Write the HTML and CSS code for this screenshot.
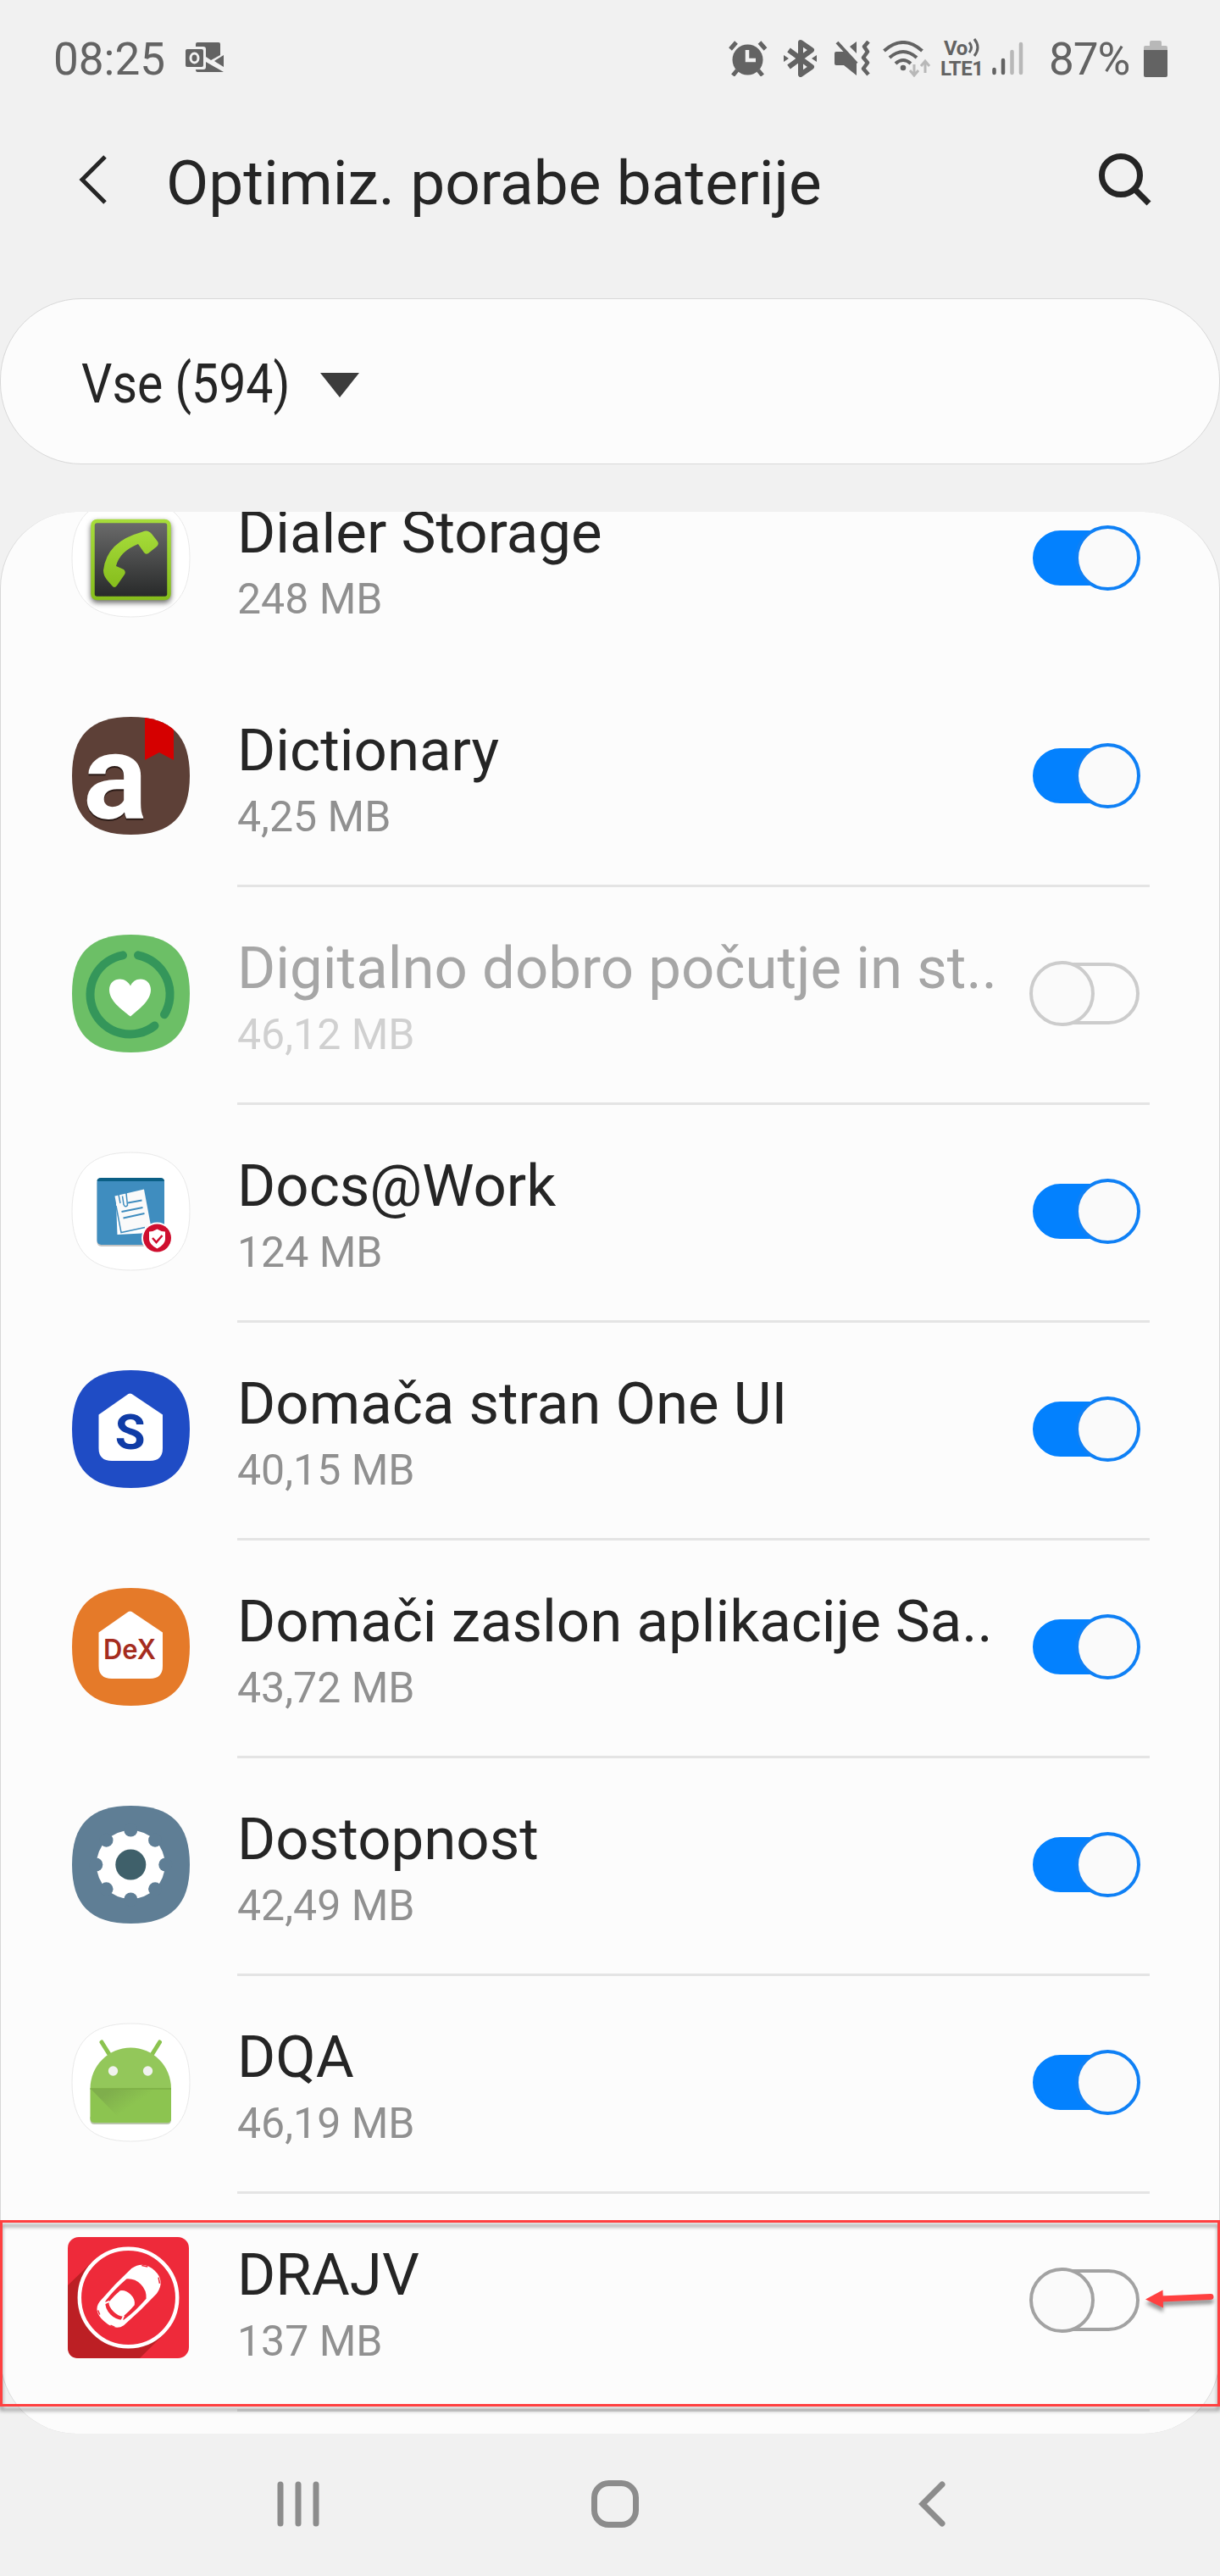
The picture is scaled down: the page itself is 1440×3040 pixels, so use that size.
FILE: index.html
```html
<!DOCTYPE html>
<html lang="sl">
<head>
    <meta charset="UTF-8">
    <meta name="viewport" content="width=device-width, initial-scale=1.0">
    <title>Optimiz. porabe baterije</title>
    <link rel="stylesheet" href="styles.css">
</head>
<body>
    <div class="screen">
        <div class="status-bar">
            <span class="clock">08:25</span>
            <svg class="icon-outlook" width="46" height="36" viewBox="0 0 46 36">
                <path d="M14 0h25q2 0 2 2v13L30 21l-6-4V8q0-3-3-3h-9V2q0-2 2-2z" fill="#636363"/>
                <path d="M45 15v14l-11-7zM24 23l21 12H14q-2 0-2-3h9q3 0 3-3z" fill="#636363"/>
                <rect x="0" y="8" width="21" height="21" rx="2" fill="#636363"/>
                <ellipse cx="10.500" cy="18.500" rx="4.500" ry="5.500" fill="none" stroke="#f1f1f1" stroke-width="3"/>
            </svg>
            <div class="status-icons">
                <svg class="icon-alarm" width="46" height="42" viewBox="0 0 46 42">
                    <ellipse cx="22.500" cy="22.500" rx="18" ry="18" fill="#636363"/>
                    <path d="M2 10l7-8M43.500 10l-7-8M10 35l-5 6M35 35l5 6" stroke="#636363" stroke-width="5"/>
                    <path d="M22 11v12h10" fill="none" stroke="#f1f1f1" stroke-width="4.500"/>
                </svg>
                <svg class="icon-bluetooth" width="40" height="44" viewBox="0 0 40 44">
                    <path d="M6 12l27 20-13 9V3l13 9L6 32" fill="none" stroke="#636363" stroke-width="6" stroke-linejoin="round"/>
                    <path d="M0 18l6 4-6 4zM39 18l-6 4 6 4z" fill="#636363"/>
                </svg>
                <svg class="icon-mute" width="42" height="42" viewBox="0 0 42 42">
                    <path d="M0 15q0-2 2-2h9l15 14v14L11 29H2q-2 0-2-2zM26 1v14l-8-8z" fill="#636363"/>
                    <path d="M3 2l23 25" stroke="#636363" stroke-width="4"/>
                    <path d="M40 1l-5 6 4 6-5 7 5 6-5 7 6 7" fill="none" stroke="#636363" stroke-width="4.500" stroke-linejoin="round"/>
                </svg>
                <svg class="icon-wifi" width="57" height="43" viewBox="0 0 57 43">
                    <path d="M1.500 12q22.500-20 45 0M8 20q16-14 32 0M15 27q9-8 18 0" fill="none" stroke="#636363" stroke-width="4"/>
                    <circle cx="24" cy="32" r="3.300" fill="#636363"/>
                    <path d="M37 28v12M32 35l5 6 5-6M50 38V25M45 30l5-6 5 6" fill="none" stroke="#b8b8b8" stroke-width="3"/>
                </svg>
                <div class="volte">
                    <div class="volte-top">Vo<svg width="14" height="22" viewBox="0 0 14 22"><path d="M2 5q5 6 0 12M8 1q8 10 0 20" fill="none" stroke="#636363" stroke-width="3"/></svg></div>
                    <div>LTE1</div>
                </div>
                <svg class="icon-signal" width="38" height="40" viewBox="0 0 38 40">
                    <path d="M2.500 33v4M13 22v15" stroke="#636363" stroke-width="4.500" stroke-linecap="round"/>
                    <path d="M23.500 12v25M34 3v34" stroke="#b8b8b8" stroke-width="4.500" stroke-linecap="round"/>
                </svg>
                <span class="percent">87%</span>
                <svg class="icon-battery" width="28" height="43" viewBox="0 0 28 43">
                    <path d="M0 11V8q0-2 2-2h5V2q0-2 2-2h10q2 0 2 2v4h5q2 0 2 2v3z" fill="#b8b8b8"/>
                    <path d="M0 11h28v30q0 2-2 2H2q-2 0-2-2z" fill="#636363"/>
                </svg>
            </div>
        </div>

        <header class="header">
            <svg class="back" width="34" height="58" viewBox="0 0 34 58">
                <path d="M31 2L4 29l27 27" fill="none" stroke="#252525" stroke-width="5"/>
            </svg>
            <h1>Optimiz. porabe baterije</h1>
            <svg class="search" width="64" height="64" viewBox="0 0 64 64">
                <circle cx="27" cy="27" r="22.500" fill="none" stroke="#252525" stroke-width="7"/>
                <path d="M43 43l17 17" stroke="#252525" stroke-width="7"/>
            </svg>
        </header>

        <div class="filter">
            <span class="filter-text">Vse (594)</span>
            <svg class="caret" width="46" height="29" viewBox="0 0 46 29"><path d="M0 0h46L23 29z" fill="#3c3c3c"/></svg>
        </div>

        <main class="list">
            <div class="row no-line">
                <svg class="app-icon" viewBox="0 0 139 139">
                    <defs>
                        <linearGradient id="dial-bg" x1="0" y1="0" x2="0" y2="1">
                            <stop offset="0" stop-color="#6c6c6c"/>
                            <stop offset="1" stop-color="#262828"/>
                        </linearGradient>
                        <linearGradient id="dial-fg" x1="0" y1="0" x2="0" y2="1">
                            <stop offset="0" stop-color="#a6dc3a"/>
                            <stop offset="1" stop-color="#86bd1c"/>
                        </linearGradient>
                        <path id="squircle" d="M69.500 0C117 0 139 22 139 69.500S117 139 69.500 139 0 117 0 69.500 22 0 69.500 0z"/>
                    </defs>
                    <use href="#squircle" fill="#fff" stroke="#e9e9e9"/>
                    <rect class="dial-frame" x="24.500" y="26" width="90" height="91" rx="5" fill="url(#dial-bg)" stroke="url(#dial-fg)" stroke-width="4.500"/>
                    <path d="M82 39Q89 35 94 41L101 50Q103 53 100 56L90 64Q87 66 85 63L78 53Q56 62 52 79L61 83Q64 86 62 89L53 102Q50 106 47 102L41 95Q37 90 37 84Q41 50 82 39z" fill="url(#dial-fg)"/>
                </svg>
                <div class="info">
                    <div class="name">Dialer Storage</div>
                    <div class="size">248 MB</div>
                </div>
                <div class="toggle on"></div>
            </div>

            <div class="row">
                <svg class="app-icon" viewBox="0 0 139 139">
                    <clipPath id="round"><use href="#squircle"/></clipPath>
                    <use href="#squircle" fill="#5d4037"/>
                    <path d="M86 0h34v51l-17-9-17 9z" fill="#d50000" clip-path="url(#round)"/>
                    <text class="letter-a" x="51" y="120" text-anchor="middle">a</text>
                </svg>
                <div class="info">
                    <div class="name">Dictionary</div>
                    <div class="size">4,25 MB</div>
                </div>
                <div class="toggle on"></div>
            </div>

            <div class="row disabled">
                <svg class="app-icon" viewBox="0 0 139 139">
                    <use href="#squircle" fill="#6cbf66"/>
                    <path d="M78 24.300A47 47 0 0 1 109 94.300M97.500 107.500A47 47 0 1 1 60 24.300" fill="none" stroke="#34965a" stroke-width="10" stroke-linecap="round"/>
                    <path d="M69 96.500C58 88 44 78 44 65C44 57 50 52.500 56.500 52.500C62 52.500 66.500 56 69 60.500C71 56 75 52.500 81 52.500C87 52.500 93 57 93 65C93 78 79 88 69 96.500z" fill="#fff"/>
                </svg>
                <div class="info">
                    <div class="name">Digitalno dobro počutje in st..</div>
                    <div class="size">46,12 MB</div>
                </div>
                <div class="toggle"></div>
            </div>

            <div class="row">
                <svg class="app-icon" viewBox="0 0 139 139">
                    <use href="#squircle" fill="#fff" stroke="#e9e9e9"/>
                    <rect x="29.500" y="31" width="79.500" height="80" rx="5" fill="#c4c4c4"/>
                    <rect x="29.500" y="30" width="79.500" height="79" rx="5" fill="#3f8dbf"/>
                    <path d="M29.500 34q0-4 5-4h69.500q5 0 5 4z" fill="#0b5f85"/>
                    <path d="M52 60l1.500 37 29-1.500 8-6z" fill="#fff"/>
                    <path d="M50.500 51.500L85 43.500l8 43-34.500 8z" fill="#fafafa"/>
                    <path d="M52 63l6 31.500 28-6" fill="none" stroke="#3f8dbf" stroke-width="1.500"/>
                    <path d="M66 59.500l16.500-3M58.500 70l25-5M60.500 77.500l25-5.500" stroke="#3f8dbf" stroke-width="1.800"/>
                    <path d="M57 60l-2-10q0-4 4-4.500t5 3l1.500 14q-3 3-4.500-1l-1.500-10" fill="none" stroke="#3f8dbf" stroke-width="1.500"/>
                    <circle cx="100.500" cy="101" r="18.500" fill="#fff"/>
                    <circle cx="100.500" cy="101" r="16.500" fill="#cf0e2e"/>
                    <path d="M91 93.500q5 0 9.500-3 4.500 3 9.500 3v9q0 6-9.500 11-9.500-5-9.500-11z" fill="#fff"/>
                    <path d="M95 101l4.500 5 7-8" fill="none" stroke="#cf0e2e" stroke-width="2.500"/>
                </svg>
                <div class="info">
                    <div class="name">Docs@Work</div>
                    <div class="size">124 MB</div>
                </div>
                <div class="toggle on"></div>
            </div>

            <div class="row">
                <svg class="app-icon" viewBox="0 0 139 139">
                    <use href="#squircle" fill="#1f4cc5"/>
                    <path id="house" d="M66.500 28q2-1 4 0L107 52.500V92q0 15-15 15H47q-15.500 0-15.500-15V52.500z" fill="#fff"/>
                    <text class="letter-s" x="68.500" y="93" text-anchor="middle">S</text>
                </svg>
                <div class="info">
                    <div class="name">Domača stran One UI</div>
                    <div class="size">40,15 MB</div>
                </div>
                <div class="toggle on"></div>
            </div>

            <div class="row">
                <svg class="app-icon" viewBox="0 0 139 139">
                    <use href="#squircle" fill="#e57a29"/>
                    <use href="#house"/>
                    <text class="letter-dex" x="37" y="83.500" textLength="62" lengthAdjust="spacingAndGlyphs">DeX</text>
                </svg>
                <div class="info">
                    <div class="name">Domači zaslon aplikacije Sa..</div>
                    <div class="size">43,72 MB</div>
                </div>
                <div class="toggle on"></div>
            </div>

            <div class="row">
                <svg class="app-icon" viewBox="0 0 139 139">
                    <use href="#squircle" fill="#5f7e95"/>
                    <circle cx="69.300" cy="69.500" r="40.500" fill="#fff"/>
                    <g fill="#5f7e95">
                        <circle cx="69.300" cy="28.500" r="8"/>
                        <circle cx="69.300" cy="110.500" r="8"/>
                        <circle cx="28.300" cy="69.500" r="8"/>
                        <circle cx="110.300" cy="69.500" r="8"/>
                        <circle cx="40.500" cy="40.700" r="8"/>
                        <circle cx="98.100" cy="40.700" r="8"/>
                        <circle cx="40.500" cy="98.300" r="8"/>
                        <circle cx="98.100" cy="98.300" r="8"/>
                    </g>
                    <circle cx="69.300" cy="69.500" r="18" fill="#3f606a"/>
                </svg>
                <div class="info">
                    <div class="name">Dostopnost</div>
                    <div class="size">42,49 MB</div>
                </div>
                <div class="toggle on"></div>
            </div>

            <div class="row">
                <svg class="app-icon" viewBox="0 0 139 139">
                    <defs>
                        <linearGradient id="fold" x1="0" y1="0" x2="1" y2="0.600">
                            <stop offset="0.200" stop-color="#7fae4c"/>
                            <stop offset="0.600" stop-color="#8cc450"/>
                        </linearGradient>
                    </defs>
                    <use href="#squircle" fill="#fff" stroke="#e9e9e9"/>
                    <path d="M21.500 110h95.500v4q0 5-5 5H26.500q-5 0-5-5z" fill="#b9c4ac"/>
                    <path d="M35 22l10 16M103.500 22l-10 16" stroke="#8bc34f" stroke-width="5" stroke-linecap="round"/>
                    <path d="M21.500 77C21.500 50 43 28.500 69.300 28.500S117 50 117 77z" fill="#93c75a"/>
                    <path d="M21.500 77H117v35q0 5-5 5H26.500q-5 0-5-5z" fill="#8cc450"/>
                    <path d="M22 77h95v35q0 5-5 5H61z" fill="url(#fold)"/>
                    <path d="M21.500 77H117" stroke="#7cae46" stroke-width="1.500"/>
                    <circle cx="48.500" cy="56" r="5.700" fill="#f1f2ef"/>
                    <circle cx="89.500" cy="56" r="5.700" fill="#f1f2ef"/>
                </svg>
                <div class="info">
                    <div class="name">DQA</div>
                    <div class="size">46,19 MB</div>
                </div>
                <div class="toggle on"></div>
            </div>

            <div class="row">
                <svg class="app-icon drajv" viewBox="0 0 143 143">
                    <rect width="143" height="143" rx="13" fill="#ee2a3a"/>
                    <path d="M0 57L29 29l85 85-29 29H13q-13 0-13-13z" fill="#bc1f24"/>
                    <circle cx="71.500" cy="71.500" r="57.700" fill="#ee2a3a" stroke="#fff" stroke-width="4.500"/>
                    <g transform="translate(71 71) rotate(-45)">
                        <path d="M-27-20Q0-22 27-21Q44-18 44.500 0T27 21Q0 22-27 20Q-39 18-40 0T-27-20z" fill="#fff"/>
                        <path d="M-22-15.500Q-6-18 14-16.500Q21.500-10 21.500 0T14 16.500Q-6 18-22 15.500Q-29 10-29 0T-22-15.500z" fill="#ee2a3a"/>
                        <path d="M-20-12Q-10-13-1-12Q4.500-8 4.500 0T-1 12Q-10 13-20 12Q-24 8-24 0T-20-12z" fill="#fff"/>
                        <path d="M-28-15.500l9 3.500M-28 15.500l9-3.500" stroke="#fff" stroke-width="2"/>
                        <path d="M-36-14l-2 5M-36 14l-2-5M38-15l4 6M38 15l4-6" stroke="#ee2a3a" stroke-width="1.500"/>
                    </g>
                </svg>
                <div class="info">
                    <div class="name">DRAJV</div>
                    <div class="size">137 MB</div>
                </div>
                <div class="toggle"></div>
            </div>
        </main>

        <nav class="nav-bar">
            <svg width="50" height="54" viewBox="0 0 50 54">
                <path d="M4 4v46M25 4v46M46 4v46" stroke="#8c8c8c" stroke-width="7" stroke-linecap="round"/>
            </svg>
            <svg width="58" height="58" viewBox="0 0 58 58">
                <rect x="4.500" y="4.500" width="49" height="49" rx="17" fill="none" stroke="#8c8c8c" stroke-width="7"/>
            </svg>
            <svg width="32" height="54" viewBox="0 0 32 54">
                <path d="M28 4L5 27l23 23" fill="none" stroke="#8c8c8c" stroke-width="7" stroke-linecap="round"/>
            </svg>
        </nav>

        <!-- marks the app that has to be switched off -->
        <div class="highlight">
            <svg class="arrow" width="90" height="34" viewBox="0 0 90 34">
                <path d="M18 16l59-2.500" stroke="#ff4040" stroke-width="7" stroke-linecap="round"/>
                <path d="M0 16.500L20.500 5.500l.5 21z" fill="#ff4040"/>
            </svg>
        </div>
    </div>
</body>
</html>
```
FILE: styles.css
```css
*,
*::before,
*::after {
    box-sizing: border-box;
}

body {
    margin: 0;
    background-color: #f1f1f1;
    font-family: Roboto, "Liberation Sans", sans-serif;
    color: #252525;
}

svg {
    display: block;
    flex-shrink: 0;
}

.screen {
    position: relative;
    width: 1440px;
    height: 3040px;
    overflow: hidden;
}

/* status bar */
.status-bar {
    display: flex;
    align-items: center;
    height: 138px;
    padding: 0 62px 0 63px;
    color: #636363;
}

.clock,
.percent {
    padding-top: 1px;
    font-size: 53px;
    line-height: 60px;
}

.icon-outlook {
    margin: 0 0 3px 24px;
}

.status-icons {
    display: flex;
    align-items: center;
    margin-left: auto;
}

.icon-bluetooth {
    margin-left: 19px;
}

.icon-mute {
    margin-left: 20px;
}

.icon-wifi {
    margin-left: 15px;
}

.volte {
    width: 52px;
    margin-left: 11px;
    font-size: 24px;
    font-weight: 700;
    line-height: 24px;
    letter-spacing: -0.5px;
}

.volte-top {
    display: flex;
    height: 24px;
    padding-left: 4px;
}

.icon-signal {
    margin-left: 9px;
}

.percent {
    width: 98px;
    margin-left: 29px;
    letter-spacing: -1px;
}

.icon-battery {
    margin-left: 14px;
}

/* title */
.header {
    display: flex;
    align-items: center;
    height: 148px;
    margin-bottom: 66px;
    padding: 0 80px 0 93px;
}

h1 {
    margin: 0 auto 0 69px;
    padding-top: 7px;
    font-size: 73px;
    font-weight: 400;
    line-height: 84px;
    white-space: nowrap;
}

/* filter */
.filter {
    display: flex;
    align-items: center;
    height: 196px;
    margin-bottom: 56px;
    padding-left: 95px;
    background-color: #fcfcfc;
    border: 1px solid #d8d8d8;
    border-radius: 96px;
}

.filter-text {
    width: 282px;
    padding-top: 5px;
    font-size: 65px;
    line-height: 76px;
    white-space: nowrap;
    transform: scaleX(0.88);
    transform-origin: left;
}

.caret {
    margin-top: 9px;
}

/* app list */
.list {
    height: 2268px;
    overflow: hidden;
    background-color: #fcfcfc;
    border: solid #d8d8d8;
    border-width: 0 1px;
    border-radius: 90px;
}

.row {
    display: flex;
    height: 257px;
    padding: 56px 93px 0 84px;
    background: linear-gradient(#e4e4e4, #e4e4e4) no-repeat 279px 254px / 1077px 3px;
}

.row.no-line {
    margin-top: -71px;
    background: none;
}

.app-icon {
    width: 139px;
    height: 139px;
    overflow: visible;
}

.drajv {
    width: 143px;
    height: 143px;
    margin: -5px 1px 0 -5px;
}

.dial-frame {
    filter: drop-shadow(0 3px 3px rgba(0, 0, 0, 0.6));
}

.letter-a {
    font-size: 141px;
    font-weight: 700;
    fill: #fff;
    filter: drop-shadow(0 2px 0 #2a1a16);
}

.letter-s {
    font-size: 58px;
    font-weight: 700;
    fill: #103ca6;
}

.letter-dex {
    font-family: Inter, sans-serif;
    font-size: 32px;
    font-weight: 600;
    fill: #a52d20;
}

.info {
    flex: 1;
    margin-left: 56px;
    white-space: nowrap;
}

.name {
    font-size: 69px;
    line-height: 80px;
}

.size {
    margin-top: 8px;
    font-size: 50px;
    line-height: 60px;
    color: #909090;
}

.disabled .name {
    color: #a6a6a6;
}

.disabled .size {
    color: #d0d0d0;
}

/* switch */
.toggle {
    position: relative;
    width: 131px;
    height: 77px;
    margin-top: 31px;
}

.toggle::before {
    content: "";
    position: absolute;
    top: 2px;
    left: 4px;
    width: 126px;
    height: 73px;
    border: 4px solid #a2a2a2;
    border-radius: 37px;
}

.toggle::after {
    content: "";
    position: absolute;
    top: 0;
    left: 0;
    width: 77px;
    height: 77px;
    background-color: #fafafa;
    border: 4px solid #a2a2a2;
    border-radius: 50%;
}

.toggle.on::before {
    top: 6px;
    width: 120px;
    height: 65px;
    background-color: #0381fe;
    border-color: #0381fe;
}

.toggle.on::after {
    left: 54px;
    border-color: #0f80f5;
}

.disabled .toggle::before,
.disabled .toggle::after {
    border-color: #cccccc;
}

/* navigation bar */
.nav-bar {
    display: grid;
    grid-template-columns: repeat(3, 374px);
    place-items: center;
    height: 165px;
    padding-left: 165px;
}

/* annotation */
.highlight {
    position: absolute;
    top: 2620px;
    left: 0;
    width: 1440px;
    height: 220px;
    border: 3px solid #ff4040;
    filter: drop-shadow(0 5px 2px rgba(0, 0, 0, 0.4));
}

.arrow {
    position: absolute;
    top: 74px;
    left: 1349px;
}
```
